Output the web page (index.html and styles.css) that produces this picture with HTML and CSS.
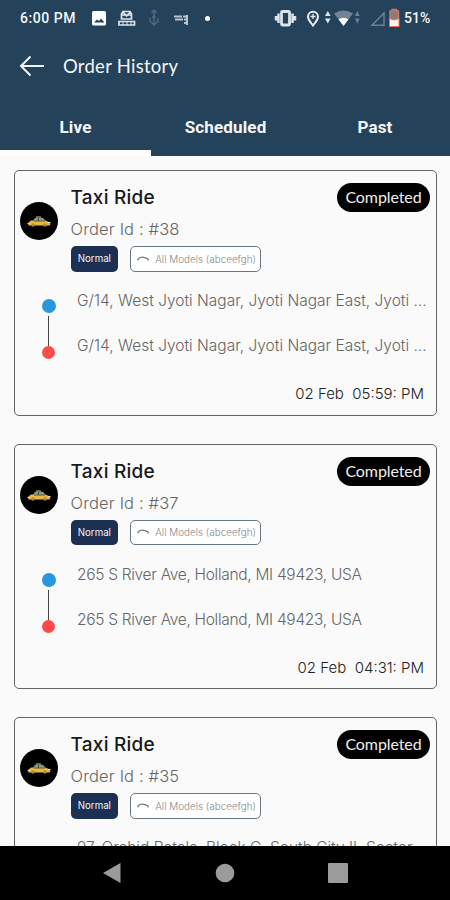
FILE: index.html
```html
<!DOCTYPE html>
<html lang="en">
<head>
<meta charset="utf-8">
<title>Order History</title>
<link rel="stylesheet" href="styles.css">
</head>
<body>
<svg class="defs" width="0" height="0" aria-hidden="true">
  <symbol id="taxi" viewBox="0 0 38 38">
    <path d="M13 19l2-3.200h8l3 3.400z" fill="#829c8d"/>
    <path d="M16 15.500h5v-1h-5z" fill="#d3c17c"/>
    <path d="M8 21l3-2.400h14l3.500 1.200 2 2.200-1 1.500H8.500z" fill="#e9b63e"/>
    <path d="M18.500 16v3M14 19h11" stroke="#263c3e" stroke-width=".8"/>
    <circle cx="13" cy="23" r="1.700" fill="#a98b50"/><circle cx="25" cy="23" r="1.700" fill="#a98b50"/>
    <path d="M7.500 21.500h2M28 20.500h2.500" stroke="#eee3bc" stroke-width="1"/>
  </symbol>
  <symbol id="car" viewBox="0 0 12 8">
    <path d="M1 5.500V4l2-1.500q3-1 5 .2L11 4v1.500" fill="none" stroke="#777" stroke-width="1.300"/>
  </symbol>
</svg>
<div class="phone">
  <header class="top">
    <div class="status">
      <span class="clock">6:00 PM</span>
      <svg class="status-icons" width="374" height="34" viewBox="76 0 374 34">
        <rect x="92" y="10" width="14" height="14.500" rx="1.500" fill="#fff"/>
        <path d="M94 21.500l3-3 2 1.600 2-2.600 3.500 4z" fill="#25425b"/>
        <g fill="none" stroke="#dfe5ea" stroke-width="1.700"><path d="M121.500 18v-5l1.500-2.500h7l1.500 2.500v5zM122 14h9M123 11l3.500 4 4-4M119 20.500h15.500v3.500H119z"/><path d="M123 20v4m4-4v4m4-4v4" stroke-width="1"/></g>
        <path d="M154 9v16m-2.500-13 2.500-3 2.500 3m-2.500 12-4-4v-3m4 7 4-4v-3m-6-1h4" fill="none" stroke="#526b80" stroke-width="1.300"/>
        <path d="M174 15.500h8m-7 3h8m0-3h5m-4 3h4m-1-4.500v10m-3-2h4" fill="none" stroke="#b9c4cd" stroke-width="2"/>
        <circle cx="207.500" cy="17.500" r="2.500" fill="#fff"/>
        <rect x="281.500" y="10.500" width="8" height="13.500" rx="1" fill="none" stroke="#dce3e9" stroke-width="2.800"/>
        <path d="M278.500 12.500v9.500m14-9.500v9.500M276 15v4.500m19-4.500v4.500" stroke="#dce3e9" stroke-width="2.500"/>
        <path d="M313 24.500c-2-3-5-5.300-5-8.800a5 5 0 0 1 10 0c0 3.500-3 5.800-5 8.800z" fill="none" stroke="#e9edf0" stroke-width="2"/>
        <path d="M310.500 15.500h5m-2.500-2.500v5" stroke="#e9edf0" stroke-width="1.300"/>
        <path d="M325 15l2.800-5 2.800 5zm0 2.500 2.800 5 2.800-5z" fill="#e1e7eb"/>
        <path d="M334 12.500q9.500-6 19 0L343.500 25z" fill="#708497"/><path d="M338.500 18.300q5-3 10 0L343.500 25z" fill="#fff"/>
        <path d="M355 15l2.300-5 2.300 5zm0 2.500 2.300 5 2.300-5z" fill="#708497"/>
        <path d="M372 24.200h12V12z" fill="none" stroke="#6b8092" stroke-width="1.500"/>
        <path d="M390 10h2V8.500h4.500V10h2v15H390z" fill="#887c7c" stroke="#cb7669" stroke-width="1.400"/>
        <path d="M389.500 17.500l4.500 1.500 5-1.500v8h-9.500z" fill="#fff4ed" stroke="#ee6d55" stroke-width="1"/>
      </svg>
      <span class="battery">51%</span>
    </div>
    <div class="bar">
      <svg width="26" height="22" viewBox="0 0 26 22"><path d="M25 11H2M11.500 1.500L2 11l9.500 9.500" fill="none" stroke="#f2f5f7" stroke-width="2"/></svg>
      <h1>Order History</h1>
    </div>
    <nav class="tabs"><span class="tab active">Live</span><span class="tab">Scheduled</span><span class="tab">Past</span></nav>
  </header>

  <main class="orders">
    <article class="card">
      <div class="head">
        <svg class="avatar" viewBox="0 0 38 38"><use href="#taxi"/></svg>
        <div class="info">
          <h2>Taxi Ride</h2><p class="order-id">Order Id : #38</p>
          <div class="chips"><span class="chip normal"><span>Normal</span></span><span class="chip model"><svg width="12" height="8"><use href="#car"/></svg><span>All Models (abceefgh)</span></span></div>
        </div>
        <span class="state">Completed</span>
      </div>
      <div class="route"><div class="track"><i class="from"></i><i class="line"></i><i class="to"></i></div>
        <div class="stops"><p>G/14, West Jyoti Nagar, Jyoti Nagar East, Jyoti ...</p><p>G/14, West Jyoti Nagar, Jyoti Nagar East, Jyoti ...</p></div></div>
      <time>02 Feb  05:59: PM</time>
    </article>
    <article class="card">
      <div class="head">
        <svg class="avatar" viewBox="0 0 38 38"><use href="#taxi"/></svg>
        <div class="info">
          <h2>Taxi Ride</h2><p class="order-id">Order Id : #37</p>
          <div class="chips"><span class="chip normal"><span>Normal</span></span><span class="chip model"><svg width="12" height="8"><use href="#car"/></svg><span>All Models (abceefgh)</span></span></div>
        </div>
        <span class="state">Completed</span>
      </div>
      <div class="route"><div class="track"><i class="from"></i><i class="line"></i><i class="to"></i></div>
        <div class="stops tight"><p>265 S River Ave, Holland, MI 49423, USA</p><p>265 S River Ave, Holland, MI 49423, USA</p></div></div>
      <time>02 Feb  04:31: PM</time>
    </article>
    <article class="card">
      <div class="head">
        <svg class="avatar" viewBox="0 0 38 38"><use href="#taxi"/></svg>
        <div class="info">
          <h2>Taxi Ride</h2><p class="order-id">Order Id : #35</p>
          <div class="chips"><span class="chip normal"><span>Normal</span></span><span class="chip model"><svg width="12" height="8"><use href="#car"/></svg><span>All Models (abceefgh)</span></span></div>
        </div>
        <span class="state">Completed</span>
      </div>
      <div class="route"><div class="track"></div>
        <div class="stops"><p>97, Orchid Petals, Block C, South City II, Sector</p></div></div>
    </article>
  </main>

  <footer class="nav">
    <svg width="20" height="22" viewBox="0 0 20 22"><path d="M1 11L18.500 1v20z" fill="#9b9b9b"/></svg>
    <svg width="20" height="20" viewBox="0 0 20 20"><circle cx="10" cy="10" r="9.300" fill="#9b9b9b"/></svg>
    <svg width="20" height="20" viewBox="0 0 20 20"><rect width="20" height="20" rx="1" fill="#9b9b9b"/></svg>
  </footer>
</div>
</body>
</html>
```
FILE: styles.css
```css
* { box-sizing: border-box; }
body, h1, h2, p { margin: 0; }
body { font-family: Inter, "Open Sans", sans-serif; background: #fafafa; }
.defs { display: none; }
.phone { width: 450px; height: 900px; display: flex; flex-direction: column; overflow: hidden; }
.top { height: 156px; flex: none; background: #25425b; color: #f4f7f9; display: flex; flex-direction: column; }
.status { height: 35px; flex: none; display: flex; align-items: center; font: 500 14px/35px Roboto, sans-serif; white-space: nowrap; }
.clock { width: 76px; padding: 1px 0 0 20px; flex: none; letter-spacing: .55px; }
.status-icons { width: 374px; height: 34px; flex: none; margin-right: -46px; }
.battery { width: 46px; flex: none; padding-top: 1px; letter-spacing: .1px; }
.battery, .clock { position: relative; }
.status-icons { margin-left: 0; }
.bar { height: 63px; flex: none; display: flex; align-items: center; padding: 0 0 2px 19px; gap: 18px; }
h1 { font: 400 18.500px/24px Lato, sans-serif; letter-spacing: .25px; }
.tabs { height: 58px; flex: none; display: grid; grid-template-columns: 151px 149px 150px; }
.tab { height: 58px; text-align: center; font: 700 17px/59px Roboto, sans-serif; letter-spacing: .15px; white-space: nowrap; }
.active { box-shadow: inset 0 -6px #fff; }

.orders { flex: 1; min-height: 0; overflow: hidden; padding: 14px 13px 0 14px; display: flex; flex-direction: column; gap: 28px; background: #fafafa; }
.card { height: 245.500px; flex: none; border: 1.500px solid #626467; border-radius: 5px; }
.head { display: grid; grid-template-columns: 38px 190px 1fr; column-gap: 12.500px; padding: 12px 6px 0 5px; height: 115px; }
.avatar { width: 38px; height: 38px; margin-top: 19px; border-radius: 50%; background: #000; }
h2 { font: 500 19px/30px Inter, sans-serif; letter-spacing: .25px; color: #18191a; white-space: nowrap; }
.order-id { font-size: 16.500px; font-weight: 300; line-height: 32px; letter-spacing: .15px; color: #666; white-space: nowrap; }
.chips { display: flex; gap: 12px; margin-top: 1px; }
.chip { height: 25.500px; border-radius: 5px; display: flex; align-items: center; white-space: nowrap; }
.normal { width: 48px; justify-content: center; background: #1b3052; color: #f1f4f8; font-size: 9.700px; }
.model { width: 131px; gap: 6px; padding-left: 6px; border: 1.500px solid #6b7780; color: #888; font-size: 9.900px; font-weight: 300; background: #fff; }
.state { justify-self: end; width: 93px; height: 29px; border-radius: 15px; background: #000; color: #eee; font: 400 16px/28px Lato, sans-serif; letter-spacing: -.1px; text-align: center; }
.route { display: grid; grid-template-columns: 29px 1fr; column-gap: 14px; padding-left: 19px; height: 91px; }
.track { display: flex; flex-direction: column; align-items: center; padding-top: 13px; }
.from { width: 14px; height: 14px; border-radius: 50%; background: #2997df; }
.line { width: 1.500px; height: 30px; margin-top: 3px; background: #444; }
.to { width: 13px; height: 13px; border-radius: 50%; background: #fb4c4b; }
.stops p { font-size: 15.500px; font-weight: 300; line-height: 45px; margin-top: -8px; height: 53px; color: #666; white-space: nowrap; }
.tight p { letter-spacing: -.3px; }
time { display: block; text-align: right; padding-right: 12px; font-size: 15px; font-weight: 300; line-height: 34px; color: #222; white-space: pre; }
.nav { height: 54px; flex: none; background: #000; display: grid; grid-template-columns: 20px 20px 20px; column-gap: 93px; justify-content: center; align-items: center; }
```
